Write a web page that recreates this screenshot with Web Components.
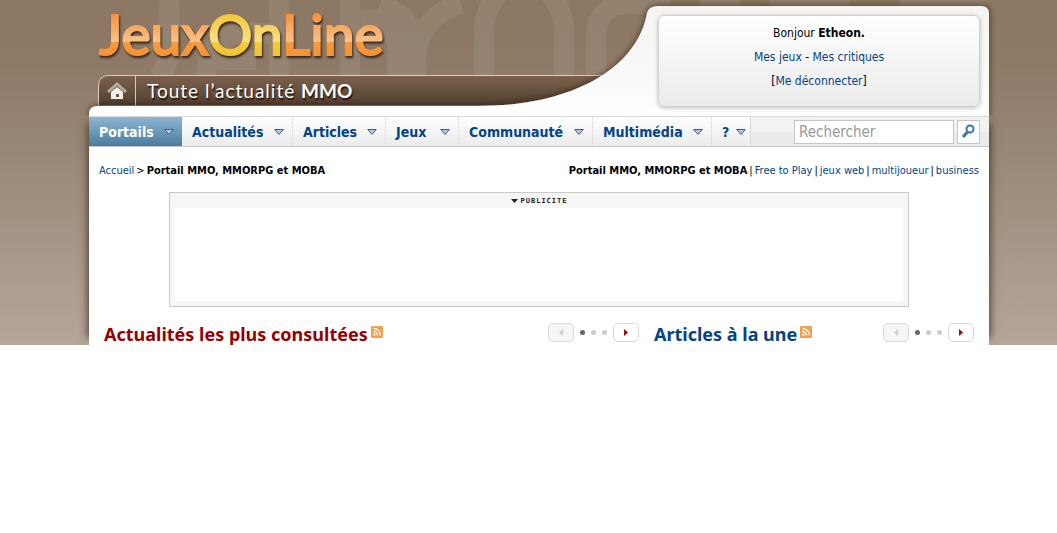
<!DOCTYPE html>
<html lang="fr">
<head>
<meta charset="utf-8">
<title>JeuxOnLine</title>
<style>
body { margin: 0; background: #fff; font-family: "DejaVu Sans Condensed", "Noto Sans", sans-serif; font-size: 11px; color: #000; }
</style>
</head>
<body>
<jol-page>
  <jol-header slot="header"></jol-header>
  <jol-nav slot="nav"></jol-nav>
  <jol-trail></jol-trail>
  <jol-advert></jol-advert>
  <jol-columns></jol-columns>
</jol-page>
<script>
const define = (name, html) => customElements.define(name, class extends HTMLElement {
  constructor() {
    super();
    const t = document.createElement('template');
    t.innerHTML = html;
    this.attachShadow({ mode: 'open' }).append(t.content.cloneNode(true));
  }
});

define('jol-watermark', `
<style>
:host { position: absolute; inset: 0 0 auto 0; height: 75px; overflow: hidden; pointer-events: none; }
svg { display: block; opacity: .07; }
</style>
<svg width="1057" height="75" aria-hidden="true" fill="none" stroke="#fff" stroke-width="20">
  <path d="M169 0V50Q169 66 158 78M270 34Q206 24 206 80M216 60H256M279 0V80M350 0V80M360 20Q397 14 397 50V80"/>
  <path d="M380 4Q416 16 416 56V80M416 56Q420 16 461 4"/>
  <path d="M484 80V34Q484 2 506 -12M564 80V34Q564 2 542 -12M596 80V36Q596 4 632 4H670M700 -4H740M770 -4H850M900 -4H985"/>
</svg>`);

define('jol-page', `
<style>
:host { display: block; position: relative; background: linear-gradient(#8c7763, #8d7966 60px, #b4a699 345px); }
.sheet { position: relative; margin: 0 68px 0 89px; }
.main { box-shadow: 8px 0 8px -7px rgba(50,30,15,.8), -8px 0 8px -7px rgba(50,30,15,.8); }
.body { background: #fff; padding: 0 10px; }
</style>
<jol-watermark></jol-watermark>
<div class="sheet">
  <slot name="header"></slot>
  <div class="main">
    <slot name="nav"></slot>
    <div class="body"><slot></slot></div>
  </div>
</div>`);

define('jol-logo', `
<style>
:host { display: block; }
a { text-decoration: none; display: block; }
text { font-family: Lato, sans-serif; font-size: 55px; font-weight: 500; }
svg { display: block; filter: drop-shadow(1px 2px 1px #332519); overflow: visible; }
</style>
<a href="#">
<svg width="290" height="60" role="img" aria-label="JeuxOnLine">
  <defs>
    <linearGradient id="o" gradientUnits="userSpaceOnUse" x1="0" y1="12" x2="0" y2="56"><stop offset="0" stop-color="#f48f35"/><stop offset=".68" stop-color="#fbc28b"/><stop offset=".68" stop-color="#f6993e"/><stop offset="1" stop-color="#f49335"/></linearGradient>
    <linearGradient id="y" gradientUnits="userSpaceOnUse" x1="0" y1="12" x2="0" y2="56"><stop offset="0" stop-color="#f3c431"/><stop offset=".68" stop-color="#fbdf8b"/><stop offset=".68" stop-color="#f5c93c"/><stop offset="1" stop-color="#f3c431"/></linearGradient>
  </defs>
  <text y="55" stroke-width="2"><tspan fill="url(#o)" stroke="url(#o)">Jeux</tspan><tspan fill="url(#y)" stroke="url(#y)">On</tspan><tspan fill="url(#o)" stroke="url(#o)">Line</tspan></text>
</svg></a>`);

define('jol-header', `
<style>
:host { display: grid; grid-template-columns: 1fr 342px; height: 116px; position: relative; z-index: 1; }
.shape { position: absolute; inset: 0; }
.shape svg { display: block; width: 100%; height: 116px; overflow: visible; }
.left { position: relative; padding: 0 0 0 10px; }
jol-logo { height: 76px; }
.strip { display: flex; height: 29px; align-items: center; }
.home { width: 36px; display: flex; justify-content: center; }
.title { font: 19px Lato, sans-serif; color: #fff; margin: 0 0 0 12px; letter-spacing: 1px; text-shadow: 1px 2px 1px #241a12; }
.title b { letter-spacing: 0; }
.user { position: relative; margin: 15px 10px 9px 11px; border-radius: 6px; border: 1px solid #d0d0d0; box-sizing: border-box; height: 92px; width: 322px; box-shadow: 0 1px 4px rgba(0,0,0,.25); background: linear-gradient(#fff, #ebebeb); text-align: center; padding-top: 5px; font-size: 12px; }
p { margin: 0; line-height: 24px; }
a { color: #034389; text-decoration: none; }
</style>
<div class="shape"><svg viewBox="0 0 900 116" preserveAspectRatio="xMaxYMin slice" aria-hidden="true">
  <defs>
    <linearGradient id="bar" x1="0" y1="0" x2="0" y2="1"><stop offset="0" stop-color="#7c624d"/><stop offset="1" stop-color="#513d2e"/></linearGradient>
    <linearGradient id="white" x1="0" y1="0" x2="0" y2="1"><stop offset="0" stop-color="#f5f4f3"/><stop offset=".7" stop-color="#fafafa"/><stop offset="1" stop-color="#fff"/></linearGradient>
    <filter id="sh" x="-5%" y="-20%" width="110%" height="120%"><feDropShadow dx="0" dy="0" stdDeviation="3" flood-color="#2c1a0c" flood-opacity=".8"/></filter>
  </defs>
  <path d="M9.500 106V86Q9.500 75.500 20 75.500H540V106Z" fill="url(#bar)" stroke="#d5cdc5"/>
  <path d="M46.500 76V106" stroke="#d5cdc5"/>
  <path d="M0 116V114Q0 106 9 106H390C480 106 548 70 558 13Q560 6 569 6H892Q900 6 900 14V116Z" fill="url(#white)" filter="url(#sh)"/>
</svg></div>
<div class="left">
  <jol-logo></jol-logo>
  <div class="strip">
    <a class="home" href="#" aria-label="Accueil"><svg width="20" height="18" viewBox="0 0 20 18"><path d="M1 10 10 2l9 8" fill="none" stroke="#b7aca2" stroke-width="3"/><path d="M4 10 10 5l6 5v7H4z" fill="#f4f1ee"/><path d="M9 12h3v3H9z" fill="#6b5443"/></svg></a>
    <h2 class="title">Toute l’actualité <b>MMO</b></h2>
  </div>
</div>
<div class="user">
  <p>Bonjour <b>Etheon.</b></p>
  <p><a href="#">Mes jeux</a> - <a href="#">Mes critiques</a></p>
  <p>[<a href="#">Me déconnecter</a>]</p>
</div>`);

define('jol-nav', `
<style>
:host { display: flex; position: relative; height: 31px; box-sizing: border-box; border-top: 1px solid #dadada; border-bottom: 1px solid #c8c8c8; background: linear-gradient(#f2f2f2 50%, #ebebeb 50%); }
nav { display: flex; background: linear-gradient(#fff, #ebebeb); border-right: 1px solid #d8d8d8; }
a { box-sizing: border-box; display: flex; align-items: center; justify-content: space-between; padding: 0 8px 0 10px; border-right: 1px dotted #d2d2d2; color: #034389; font-weight: 700; font-size: 14px; text-decoration: none; }
a:last-child { border: 0; padding: 0 4px 0 10px; }
a.on { color: #fff; background: linear-gradient(#8fb5d2, #4a7c9f); border: 0; }
form { margin-left: auto; display: flex; gap: 3px; align-items: center; padding-right: 9px; }
input, button { box-sizing: border-box; height: 24px; margin: 0; border: 1px solid #c6c6c6; background: #fff; font: 15px "DejaVu Sans Condensed", sans-serif; }
input { width: 160px; padding: 0 4px; }
input::placeholder { color: #999; opacity: 1; }
button { width: 23px; padding: 0; display: grid; place-items: center; }
</style>
<nav></nav>
<form><input type="search" placeholder="Rechercher" aria-label="Rechercher"><button type="button" aria-label="Lancer la recherche"><svg width="15" height="15" viewBox="0 0 15 15" fill="none" stroke="#3875ab"><circle cx="9" cy="5" r="3.500" stroke-width="2"/><path d="M6.500 8 2 13" stroke-width="3"/></svg></button></form>`);

document.querySelectorAll('jol-nav').forEach(el => {
  el.shadowRoot.querySelector('nav').innerHTML = [
    ['Portails', 93], ['Actualités', 111], ['Articles', 93], ['Jeux', 73], ['Communauté', 134], ['Multimédia', 119], ['?', 38]
  ].map(([t, w], i) => `<a href="#" style="width:${w}px"${i ? '' : ' class="on"'}><span>${t}</span><svg width="10" height="8" viewBox="0 0 10 8" aria-hidden="true"><path d="M.7 1.500H9.300L5 6.500z" fill="#b9c4e8" stroke="#3f5d98"/></svg></a>`).join('');
});

define('jol-trail', `
<style>
:host { display: flex; justify-content: space-between; padding-top: 16px; line-height: 16px; font-size: 11px; }
div { display: flex; gap: 2px; }
a { color: #034389; text-decoration: none; }
</style>
<div><a href="#">Accueil</a> <span>&gt;</span> <b>Portail MMO, MMORPG et MOBA</b></div>
<div><b>Portail MMO, MMORPG et MOBA</b> <span>|</span> <a href="#">Free to Play</a> <span>|</span> <a href="#">jeux web</a> <span>|</span> <a href="#">multijoueur</a> <span>|</span> <a href="#">business</a></div>`);

define('jol-advert', `
<style>
:host { display: block; box-sizing: border-box; margin: 13px 70px 0; height: 115px; border: 1px solid #c9c9c9; background: #f6f6f6; padding: 0 5px 5px; }
.label { display: flex; height: 15px; align-items: center; justify-content: center; gap: 3px; font: 700 7px "DejaVu Sans Mono", monospace; letter-spacing: 1px; color: #222; }
.space { height: 93px; background: #fff; }
</style>
<div class="label"><svg width="7" height="4" aria-hidden="true"><path d="M0 0h7L3.500 4z" fill="#222"/></svg>PUBLICITE</div>
<div class="space"></div>`);

define('jol-pager', `
<style>
:host { display: flex; align-items: center; gap: 6px; height: 19px; }
button { width: 26px; height: 19px; box-sizing: border-box; padding: 0; border: 1px solid #d8d8d8; border-radius: 5px; background: #fff; display: grid; place-items: center; }
button:disabled { background: #f6f6f6; }
i { width: 5px; height: 5px; border-radius: 50%; background: #ccc; }
i.on { background: #666; }
.dots { display: flex; gap: 6px; }
</style>
<button disabled aria-label="Précédent"><svg width="4" height="7"><path d="M4 0v7L0 3.500z" fill="#ccc"/></svg></button>
<span class="dots"><i class="on"></i><i></i><i></i></span>
<button aria-label="Suivant"><svg width="4" height="7"><path d="M0 0v7l4-3.500z" fill="#b00000"/></svg></button>`);

define('jol-heading', `
<style>
:host { display: flex; align-items: flex-start; height: 22px; }
h3 { margin: 0; font: 700 18px/22px "Noto Sans", sans-serif; }
.feed { margin: 3px 0 0 3px; }
svg { display: block; }
jol-pager { margin-left: auto; }
</style>
<h3><slot></slot></h3>
<a class="feed" href="#" aria-label="Flux RSS"><svg width="12" height="12" viewBox="0 0 12 12" fill="none" stroke="#fff" stroke-width="1.300"><rect width="12" height="12" rx="1" fill="#f0a050" stroke="none"/><path d="M2.500 2.500a7 7 0 0 1 7 7M2.500 5.500a4 4 0 0 1 4 4"/><circle cx="3.300" cy="8.700" r=".5"/></svg></a>
<jol-pager></jol-pager>`);

define('jol-columns', `
<style>
:host { display: grid; grid-template-columns: 535fr 320fr; gap: 15px; padding: 16px 5px 0; }
.red { color: #960000; }
.blue { color: #034389; }
</style>
<jol-heading class="red">Actualités les plus consultées</jol-heading>
<jol-heading class="blue">Articles à la une</jol-heading>`);
</script>
</body>
</html>
